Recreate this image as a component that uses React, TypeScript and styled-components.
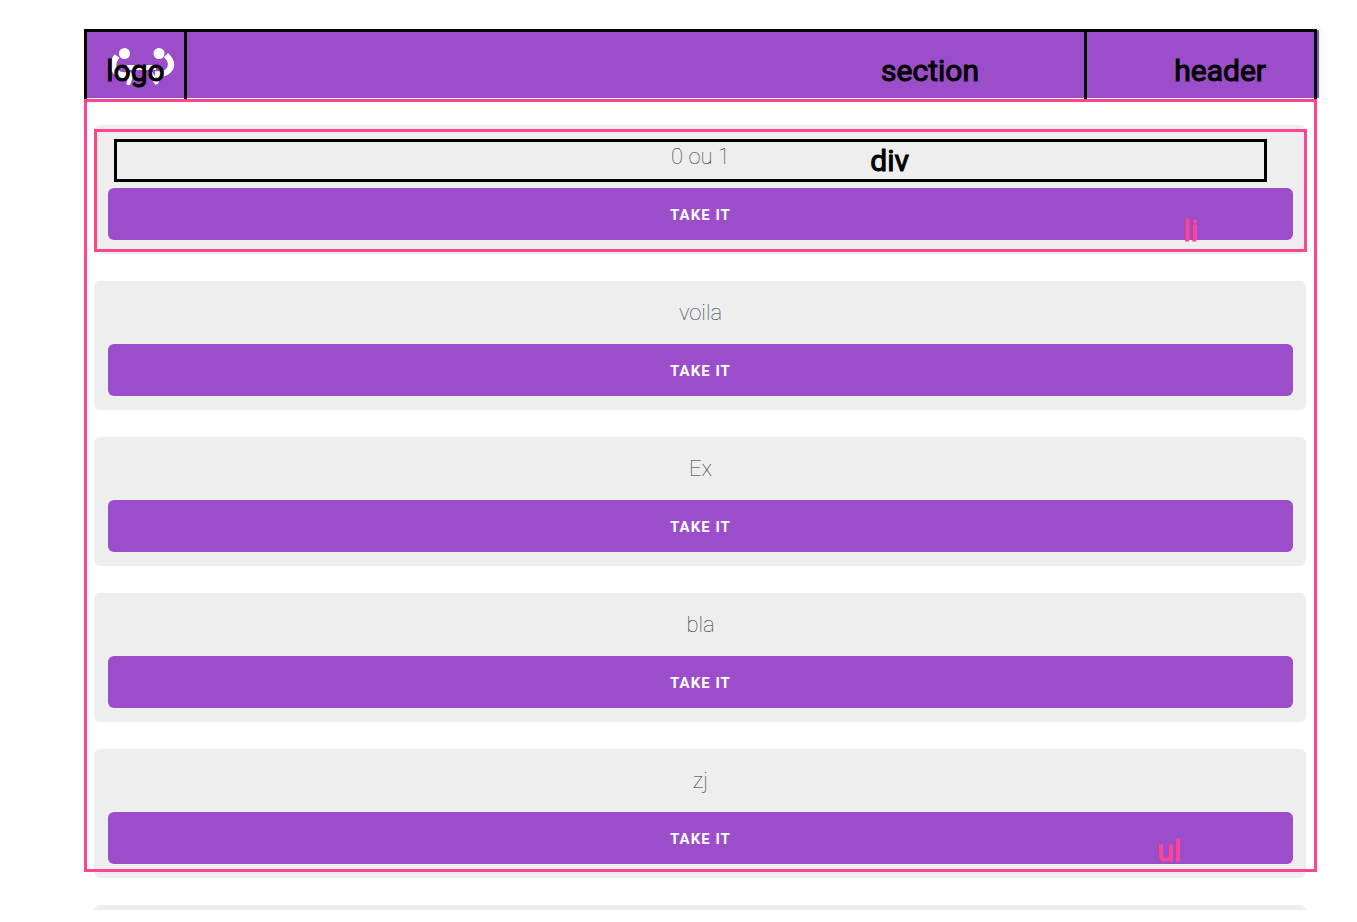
import React from 'react';
import styled, { createGlobalStyle } from 'styled-components';

const PURPLE = '#9b4dca';
const PINK = '#ff4490';

const GlobalStyle = createGlobalStyle`
  *, *::before, *::after { box-sizing: border-box; }
  body {
    margin: 0;
    background: #fff;
    font-family: Roboto, "Liberation Sans", sans-serif;
  }
`;

const Page = styled.main`
  display: flex;
  height: 100vh;
  padding: 29px 40px 12px 84px;
  overflow: hidden;
`;

const Canvas = styled.div`
  position: relative;
  display: flex;
  flex: 1;
  min-width: 0;
`;

const Screen = styled.div`
  flex: 1;
  min-width: 0;
  margin: 1px -2px 0 0;
  overflow: hidden;
`;

const Header = styled.header`
  display: flex;
  align-items: center;
  height: 68px;
  padding-left: 26px;
  background: ${PURPLE};
`;

const Logo = styled.svg`
  display: block;
  width: 66px;
  height: 42px;
`;

const List = styled.ul`
  display: flex;
  flex-direction: column;
  gap: 27px;
  margin: 0;
  padding: 27px 13px 0 10px;
  list-style: none;
`;

const Card = styled.li`
  height: 129px;
  padding: 14px 13px 14px 14px;
  border-radius: 6px;
  background: #eee;
`;

const CardTitle = styled.h2`
  height: 49px;
  margin: 0;
  color: #234;
  font-size: 22px;
  font-weight: 100;
  line-height: 36px;
  text-align: center;
`;

const TakeButton = styled.button`
  display: block;
  width: 100%;
  height: 52px;
  padding: 2px 0 0;
  border: 0;
  border-radius: 6px;
  background: ${PURPLE};
  color: #fff;
  font-family: inherit;
  font-size: 15px;
  font-weight: 700;
  letter-spacing: 1px;
  text-transform: uppercase;
  cursor: pointer;
`;

const Overlay = styled.div`
  position: absolute;
  inset: 0 0 38px;
  display: flex;
  flex-direction: column;
  pointer-events: none;
`;

const HeaderFrames = styled.div`
  display: flex;
  height: 70px;
  border: solid #000;
  border-width: 3px 3px 0;
`;

const Frame = styled.div<{ $width?: number; $end?: number }>`
  display: flex;
  flex: ${(p) => (p.$width ? `0 0 ${p.$width}px` : '1')};
  align-items: center;
  justify-content: ${(p) => (p.$end ? 'flex-end' : 'center')};
  padding-right: ${(p) => p.$end ?? 0}px;
  padding-top: 10px;

  & + & {
    border-left: 3px solid #000;
  }
`;

const ListFrame = styled.div`
  display: flex;
  flex: 1;
  flex-direction: column;
  justify-content: space-between;
  align-items: flex-end;
  padding: 27px 7px 0;
  border: 3px solid ${PINK};
`;

const ItemFrame = styled.div`
  position: relative;
  width: 100%;
  height: 123px;
  padding: 7px 37px 0 17px;
  border: 3px solid ${PINK};
`;

const TitleFrame = styled.div`
  display: flex;
  align-items: center;
  justify-content: flex-end;
  height: 43px;
  padding-right: 355px;
  border: 3px solid #000;
`;

const Label = styled.span<{ $color?: string }>`
  color: ${(p) => p.$color ?? '#000'};
  font-size: 30px;
  line-height: 36px;
  -webkit-text-stroke: 1px;
`;

const ItemLabel = styled(Label)`
  position: absolute;
  right: 106px;
  bottom: 0;
`;

const ListLabel = styled(Label)`
  margin-right: 126px;
`;

const exercises = ['0 ou 1', 'voila', 'Ex', 'bla', 'zj'];

export default function App() {
  return (
    <>
      <GlobalStyle />
      <Page>
        <Canvas>
          <Screen>
            <Header>
              <Logo viewBox="0 0 66 42" aria-hidden="true">
                <g fill="#fff">
                  <circle cx="14.5" cy="10.5" r="5.5" />
                  <circle cx="49" cy="10.5" r="5.5" />
                </g>
                <g fill="none" stroke="#fff">
                  <path strokeWidth="6" d="M7 13Q0 22 6 29Q10 33 17 32" />
                  <path strokeWidth="6" d="M56 12Q65 21 58 28Q54 32 45 31" />
                  <path strokeWidth="5" d="M17 24.500H46" />
                  <path strokeWidth="4" d="M22 30L18 42M40 29L47 41" />
                  <path strokeWidth="3" d="M50 31L46 41" />
                </g>
              </Logo>
            </Header>
            <List>
              {exercises.map((name) => (
                <Card key={name}>
                  <CardTitle>{name}</CardTitle>
                  <TakeButton type="button">Take it</TakeButton>
                </Card>
              ))}
              <Card aria-hidden="true" />
            </List>
          </Screen>
          <Overlay>
            <HeaderFrames>
              <Frame $width={97}>
                <Label>logo</Label>
              </Frame>
              <Frame $end={105}>
                <Label>section</Label>
              </Frame>
              <Frame $width={230} $end={48}>
                <Label>header</Label>
              </Frame>
            </HeaderFrames>
            <ListFrame>
              <ItemFrame>
                <TitleFrame>
                  <Label>div</Label>
                </TitleFrame>
                <ItemLabel $color={PINK}>li</ItemLabel>
              </ItemFrame>
              <ListLabel $color={PINK}>ul</ListLabel>
            </ListFrame>
          </Overlay>
        </Canvas>
      </Page>
    </>
  );
}
